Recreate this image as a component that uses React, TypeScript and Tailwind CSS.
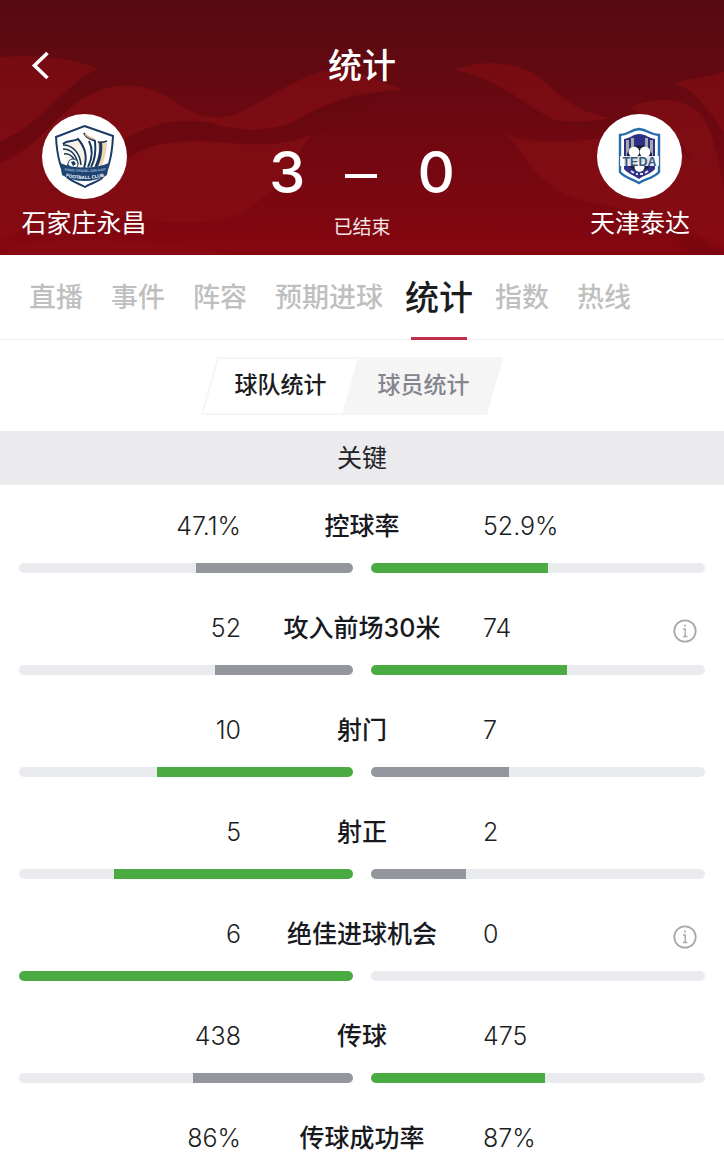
import { useState } from 'react'

interface Stat {
  label: string
  home: string
  away: string
  homeValue: number
  awayValue: number
  info?: boolean
}

const stats: Stat[] = [
  { label: '控球率', home: '47.1%', away: '52.9%', homeValue: 47.1, awayValue: 52.9 },
  { label: '攻入前场30米', home: '52', away: '74', homeValue: 52, awayValue: 74, info: true },
  { label: '射门', home: '10', away: '7', homeValue: 10, awayValue: 7 },
  { label: '射正', home: '5', away: '2', homeValue: 5, awayValue: 2 },
  { label: '绝佳进球机会', home: '6', away: '0', homeValue: 6, awayValue: 0, info: true },
  { label: '传球', home: '438', away: '475', homeValue: 438, awayValue: 475 },
  { label: '传球成功率', home: '86%', away: '87%', homeValue: 86, awayValue: 87 },
]

const tabs = ['直播', '事件', '阵容', '预期进球', '统计', '指数', '热线']

function Waves() {
  return (
    <svg
      className="absolute inset-0 h-full w-full"
      viewBox="0 0 724 255"
      preserveAspectRatio="none"
      aria-hidden="true"
    >
      <defs>
        <linearGradient id="ribbon" x1="0" y1="50" x2="0" y2="255" gradientUnits="userSpaceOnUse">
          <stop offset="0" stopColor="#760b12" />
          <stop offset="0.5" stopColor="#7f0c13" />
          <stop offset="1" stopColor="#880a12" />
        </linearGradient>
        <linearGradient id="shade" x1="0" y1="50" x2="0" y2="255" gradientUnits="userSpaceOnUse">
          <stop offset="0" stopColor="#5f0910" />
          <stop offset="1" stopColor="#7d060e" />
        </linearGradient>
      </defs>
      <path d="M0 143C25 132 40 112 62 95S85 72 98 69L125 86C85 92 70 112 50 128S15 155 0 161Z" fill="url(#shade)" />
      <path d="M0 57C30 55 70 57 98 69C80 76 66 92 50 106S20 134 0 141Z" fill="url(#ribbon)" />
      <path d="M100 172C125 128 165 112 212 122C245 133 275 130 300 118C320 105 350 98 380 94C370 105 330 132 310 136C285 150 245 142 205 141C165 142 140 146 122 160Z" fill="url(#shade)" />
      <path d="M0 163C35 152 52 118 85 97C115 80 150 82 178 104C205 121 225 120 245 110C275 95 300 75 330 70C355 70 380 80 402 90C355 92 330 101 300 118C275 133 240 132 212 123C165 114 130 133 110 150C70 180 45 195 0 215Z" fill="url(#ribbon)" />
      <path d="M122 165C145 141 180 140 220 142C260 147 290 145 312 134C295 155 285 180 262 198C235 224 190 226 150 220C110 208 60 215 0 238V205C50 190 90 185 122 165Z" fill="url(#ribbon)" />
      <path d="M20 246C60 236 130 240 210 250L230 255H0Z" fill="url(#ribbon)" />
      <path d="M500 85C520 98 530 112 548 117C570 124 600 122 625 118L630 136C580 128 535 122 500 85Z" fill="url(#shade)" />
      <path d="M455 70C480 60 515 60 540 78C558 94 575 112 610 118C590 122 565 124 548 117C520 100 495 78 455 70Z" fill="url(#ribbon)" />
      <path d="M505 134C535 146 580 142 625 135C650 130 680 145 700 170L724 198V245C690 230 670 224 645 215C615 204 585 205 558 190C530 174 524 150 505 134Z" fill="url(#ribbon)" />
      <path d="M630 107C660 95 690 98 705 120C715 140 718 160 724 190V213C705 190 695 160 678 140Z" fill="url(#ribbon)" />
      <path d="M675 83C695 78 710 76 724 72V132C710 112 695 90 675 83Z" fill="url(#ribbon)" />
      <path d="M645 222C680 226 705 240 724 255H690C680 242 665 232 645 222Z" fill="url(#shade)" />
    </svg>
  )
}

function HomeCrest() {
  return (
    <svg viewBox="0 0 85 85" className="h-full w-full" role="img" aria-label="石家庄永昌">
      <path d="M42.5 12L71 22C70 45 65 60 59 65C53 69 47 70 43 73C38 70 31 68 26 64C18 56 15 42 14 23Z" fill="#fff" stroke="#1c3b66" strokeWidth="2" />
      <path d="M21 29C27 26 32 28 36 25C42 29 45 38 43 53H27C23 47 22 38 21 29Z" fill="#faf3e8" />
      <path d="M55 27L65 27C65 38 62 47 59 54H52C56 44 58 36 55 27Z" fill="#eed4b0" />
      <path d="M21 30C25 26 32 28 36 25C43 33 46 42 42 54" fill="none" stroke="#17375f" strokeWidth="2" />
      <path d="M42 19C44 25 50 25 53 27C54 37 53 46 49 53M47 27C51 35 50 45 46 53" fill="none" stroke="#17375f" strokeWidth="2" />
      <path d="M43 20C45 23 49 24 52 25" fill="none" stroke="#d9b277" strokeWidth="1.5" />
      <path d="M56 28C59 29 62 28 65 27" fill="none" stroke="#17375f" strokeWidth="1.6" />
      <path d="M57 28H60C61 38 59 47 55 54H52C56 45 58 38 57 28Z" fill="#17375f" />
      <path d="M21 31C31 31 38 39 39 51M21 35C29 35 34 41 36 50M22 40C28 39 33 44 34 51" fill="none" stroke="#17375f" strokeWidth="1.5" />
      <circle cx="31" cy="50" r="5" fill="#fff" stroke="#17375f" />
      <path d="M29 48L32 47L34 50L31 52ZM25 50L28 52L28 54H26Z" fill="#17375f" />
      <path d="M18 49C32 55 53 55 67 49L65 61C52 69 33 69 20 61Z" fill="#1d4373" />
      <path id="crest-arc-top" d="M19 56Q42 60 67 56" fill="none" />
      <path id="crest-arc-bottom" d="M22 62Q42 68 64 62" fill="none" />
      <text fill="#a9bdd6" fontSize="3.6" fontWeight="700" fontFamily="Liberation Sans, sans-serif" textAnchor="middle">
        <textPath href="#crest-arc-top" startOffset="50%">YONG CHANG JUN HAO</textPath>
      </text>
      <text fill="#fff" fontSize="4.6" fontWeight="700" fontFamily="Liberation Sans, sans-serif" textAnchor="middle">
        <textPath href="#crest-arc-bottom" startOffset="50%">FOOTBALL CLUB</textPath>
      </text>
    </svg>
  )
}

function AwayCrest() {
  return (
    <svg viewBox="0 0 85 85" className="h-full w-full" role="img" aria-label="天津泰达">
      <path d="M23 21C31 21 33 16 42 15C51 16 54 21 62 21V58C57 64 48 65 42 69C36 65 28 64 23 58Z" fill="#fff" stroke="#286cac" strokeWidth="2.4" />
      <path d="M27 25C34 24 36 20 42 20C49 20 51 24 58 25V55C54 60 47 61 42 65C37 61 31 60 27 55Z" fill="#302f87" />
      <path d="M29 26H32V43H29ZM34 24H37V36H34ZM48 24H51V36H48ZM53 26H56V43H53Z" fill="#a3a9a4" />
      <circle cx="42.5" cy="44" r="13" fill="#1a1d42" />
      <circle cx="37" cy="38" r="5.4" fill="#fff" />
      <circle cx="48" cy="38" r="5.4" fill="#fff" />
      <circle cx="42.5" cy="53" r="5" fill="#fff" />
      <path d="M23 42H62V52H23Z" fill="#fff" opacity="0.88" />
      <text x="42.5" y="51.5" textAnchor="middle" fill="#34597c" fontSize="12.5" fontWeight="700" fontFamily="Liberation Sans, sans-serif">TEDA</text>
      <path d="M34 57L37 59M39 60H41M43 60H46M48 59L51 57" stroke="#dfe4f2" strokeWidth="2" />
    </svg>
  )
}

function Team({ name, children }: { name: string; children: React.ReactNode }) {
  return (
    <div className="flex w-32 flex-col items-center">
      <div className="h-[85px] w-[85px] overflow-hidden rounded-full bg-white">{children}</div>
      <p className="mt-1 text-[25px] leading-10 whitespace-nowrap">{name}</p>
    </div>
  )
}

function Bar({ value, total, winning, side }: { value: number; total: number; winning: boolean; side: 'home' | 'away' }) {
  return (
    <div className={`flex h-2.5 flex-1 overflow-hidden rounded-full bg-[#e9ebee] ${side === 'home' ? 'justify-end' : ''}`}>
      <div className={winning ? 'bg-[#4aab42]' : 'bg-[#93969d]'} style={{ width: `${(value / total) * 100}%` }} />
    </div>
  )
}

function StatRow({ stat }: { stat: Stat }) {
  const total = stat.homeValue + stat.awayValue
  return (
    <li className="h-[102px] px-[19px] pt-[22px]">
      <div className="grid h-10 grid-cols-[1fr_242px_1fr] items-center text-[25px] text-[#1c1e22]">
        <span className="text-right font-light">{stat.home}</span>
        <span className="text-center font-medium text-[#17191e]">{stat.label}</span>
        <div className="flex items-center justify-between">
          <span className="font-light">{stat.away}</span>
          {stat.info && (
            <button type="button" aria-label={`${stat.label}说明`} className="mt-1 mr-2">
              <svg viewBox="0 0 24 24" className="h-6 w-6" fill="none" stroke="#a9a9ab" strokeWidth="1.8">
                <circle cx="12" cy="12" r="10.7" />
                <path d="M10 10H12.2V17.5M10 17.5H14.4" strokeWidth="1.4" />
                <circle cx="12" cy="6.5" r="0.4" strokeWidth="1.4" />
              </svg>
            </button>
          )}
        </div>
      </div>
      <div className="mt-4 flex gap-[18px]">
        <Bar value={stat.homeValue} total={total} winning={stat.homeValue > stat.awayValue} side="home" />
        <Bar value={stat.awayValue} total={total} winning={stat.awayValue > stat.homeValue} side="away" />
      </div>
    </li>
  )
}

export default function App() {
  const [tab, setTab] = useState('统计')
  const [view, setView] = useState<'team' | 'player'>('team')

  return (
    <div className="min-h-screen bg-white font-['Inter','Noto_Sans_CJK_SC',sans-serif]">
      {/* Match header */}
      <header className="relative bg-linear-to-b from-[#570a11] via-[#6d0811] to-[#860610] text-white">
        <Waves />
        <div className="relative px-5 pt-10 pb-[9px]">
          <div className="grid h-[52px] grid-cols-[1fr_auto_1fr] items-center">
            <button type="button" aria-label="返回" className="w-10">
              <svg viewBox="0 0 40 40" className="h-10 w-10" fill="none" stroke="#fff" strokeWidth="3.6">
                <path d="M27.5 7L14.5 19.5L27.5 32" />
              </svg>
            </button>
            <h1 className="text-[34px] leading-none font-medium">统计</h1>
          </div>
          <div className="mt-[22px] flex items-start justify-between">
            <Team name="石家庄永昌"><HomeCrest /></Team>
            <div className="flex flex-col items-center pt-6">
              <div className="flex items-center text-[58px] leading-[68px] font-medium">
                <span>3</span>
                <span className="mx-10 mt-2 h-1 w-8 bg-white" />
                <span>0</span>
              </div>
              <p className="mt-1 text-[19px] leading-9 text-white/90">已结束</p>
            </div>
            <Team name="天津泰达"><AwayCrest /></Team>
          </div>
        </div>
      </header>

      {/* Tabs */}
      <nav className="flex h-[85px] items-stretch gap-7 border-b border-[#efeff1] px-[29px]">
        {tabs.map((name) => (
          <button
            key={name}
            type="button"
            onClick={() => setTab(name)}
            className={
              name === tab
                ? 'relative -mx-1.5 text-[34px] font-medium whitespace-nowrap text-[#1c1c1e]'
                : 'pt-0.5 text-[27px] font-medium whitespace-nowrap text-[#bfbfc0]'
            }
          >
            {name}
            {name === tab && <span className="absolute inset-x-1.5 -bottom-px h-[3px] bg-[#c32d4c]" />}
          </button>
        ))}
      </nav>

      {/* Team / player switch */}
      <div className="flex h-[91px] items-center justify-center pr-5">
        <button
          type="button"
          onClick={() => setView('team')}
          className={`relative h-[58px] w-[143px] text-[23px] font-medium ${view === 'team' ? 'text-[#1c1c1e]' : 'text-[#85858f]'}`}
        >
          <span className={`absolute inset-0 -skew-x-[16deg] border-2 border-[#f5f5f6] ${view === 'team' ? 'bg-white' : 'bg-[#f5f5f6]'}`} />
          <span className="relative">球队统计</span>
        </button>
        <button
          type="button"
          onClick={() => setView('player')}
          className={`relative h-[58px] w-[143px] text-[23px] font-medium ${view === 'player' ? 'text-[#1c1c1e]' : 'text-[#85858f]'}`}
        >
          <span className={`absolute inset-0 -skew-x-[16deg] border-2 border-[#f5f5f6] ${view === 'player' ? 'bg-white' : 'bg-[#f5f5f6]'}`} />
          <span className="relative">球员统计</span>
        </button>
      </div>

      {/* Stats */}
      <section>
        <h2 className="flex h-[54px] items-center justify-center bg-[#ebebed] pt-0.5 text-[25px] text-[#222328]">关键</h2>
        <ul>
          {stats.map((stat) => (
            <StatRow key={stat.label} stat={stat} />
          ))}
        </ul>
      </section>
    </div>
  )
}
